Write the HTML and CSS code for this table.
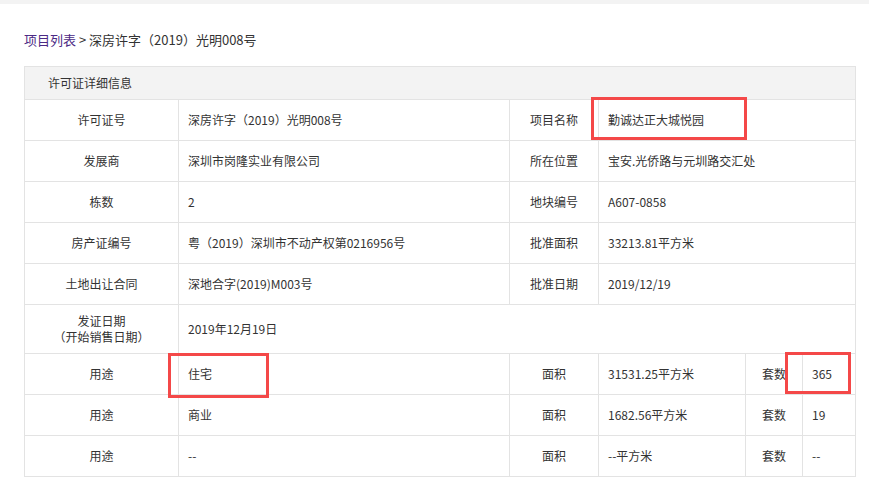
FILE: index.html
```html
<!DOCTYPE html>
<html lang="zh-CN">
<head>
<meta charset="utf-8">
<title>许可证详细信息</title>
<link rel="stylesheet" href="styles.css">
</head>
<body>
<div class="topbar"></div>
<div class="page">
  <div class="crumb"><a class="crumb-link" href="#">项目列表</a> &gt; 深房许字（2019）光明008号</div>
  <div class="wrap">
    <table class="info">
      <colgroup>
        <col class="c1"><col class="c2"><col class="c3"><col class="c4"><col class="c5"><col class="c6">
      </colgroup>
      <thead>
        <tr><th colspan="6" class="head">许可证详细信息</th></tr>
      </thead>
      <tbody>
        <tr><td class="lbl">许可证号</td><td class="val">深房许字（2019）光明008号</td><td class="lbl">项目名称</td><td class="val" colspan="3">勤诚达正大城悦园</td></tr>
        <tr><td class="lbl">发展商</td><td class="val">深圳市岗隆实业有限公司</td><td class="lbl">所在位置</td><td class="val" colspan="3">宝安.光侨路与元圳路交汇处</td></tr>
        <tr><td class="lbl">栋数</td><td class="val">2</td><td class="lbl">地块编号</td><td class="val" colspan="3">A607-0858</td></tr>
        <tr><td class="lbl">房产证编号</td><td class="val">粤（2019）深圳市不动产权第0216956号</td><td class="lbl">批准面积</td><td class="val" colspan="3">33213.81平方米</td></tr>
        <tr><td class="lbl">土地出让合同</td><td class="val">深地合字(2019)M003号</td><td class="lbl">批准日期</td><td class="val" colspan="3">2019/12/19</td></tr>
        <tr class="tall"><td class="lbl">发证日期<br>（开始销售日期）</td><td class="val" colspan="5">2019年12月19日</td></tr>
        <tr><td class="lbl">用途</td><td class="val">住宅</td><td class="lbl">面积</td><td class="val">31531.25平方米</td><td class="lbl">套数</td><td class="val">365</td></tr>
        <tr><td class="lbl">用途</td><td class="val">商业</td><td class="lbl">面积</td><td class="val">1682.56平方米</td><td class="lbl">套数</td><td class="val">19</td></tr>
        <tr><td class="lbl">用途</td><td class="val">--</td><td class="lbl">面积</td><td class="val">--平方米</td><td class="lbl">套数</td><td class="val">--</td></tr>
      </tbody>
    </table>
    <div class="mark mark-name"></div>
    <div class="mark mark-use"></div>
    <div class="mark mark-count"></div>
  </div>
</div>
</body>
</html>
```
FILE: styles.css
```css
html, body {
  margin: 0;
  padding: 0;
  background: #fff;
}
body {
  font-family: "Noto Sans CJK SC", "Microsoft YaHei", sans-serif;
  color: #333;
  font-size: 12px;
}
.topbar {
  height: 4px;
  background: #f3f3f3;
}
.page {
  padding: 26px 0 0 24px;
}
.crumb {
  font-size: 13px;
  line-height: 20px;
  height: 20px;
  color: #333;
}
.crumb-link {
  color: #4c2a85;
  text-decoration: none;
}
.wrap {
  position: relative;
  margin-top: 16px;
  width: 831px;
}
.info {
  border-collapse: collapse;
  table-layout: fixed;
  width: 831px;
}
.c1 { width: 154px; }
.c2 { width: 331px; }
.c3 { width: 89px; }
.c4 { width: 147px; }
.c5 { width: 57px; }
.c6 { width: 53px; }
.info th, .info td {
  border: 1px solid #e3e3e3;
  padding: 0;
  font-weight: normal;
  font-size: 12px;
  line-height: 16px;
}
.head {
  background: #f3f3f3;
  text-align: left;
  height: 32px;
  padding-left: 23px !important;
}
.info td {
  height: 40px;
}
.info tr.tall td {
  height: 48px;
}
.lbl {
  text-align: center;
}
.val {
  text-align: left;
  padding-left: 9px !important;
}
.mark {
  position: absolute;
  border: 3px solid #f44848;
  box-sizing: border-box;
}
.mark-name {
  left: 567px;
  top: 31px;
  width: 156px;
  height: 43px;
}
.mark-use {
  left: 144px;
  top: 287px;
  width: 101px;
  height: 45px;
}
.mark-count {
  left: 761px;
  top: 286px;
  width: 66px;
  height: 42px;
}
```
